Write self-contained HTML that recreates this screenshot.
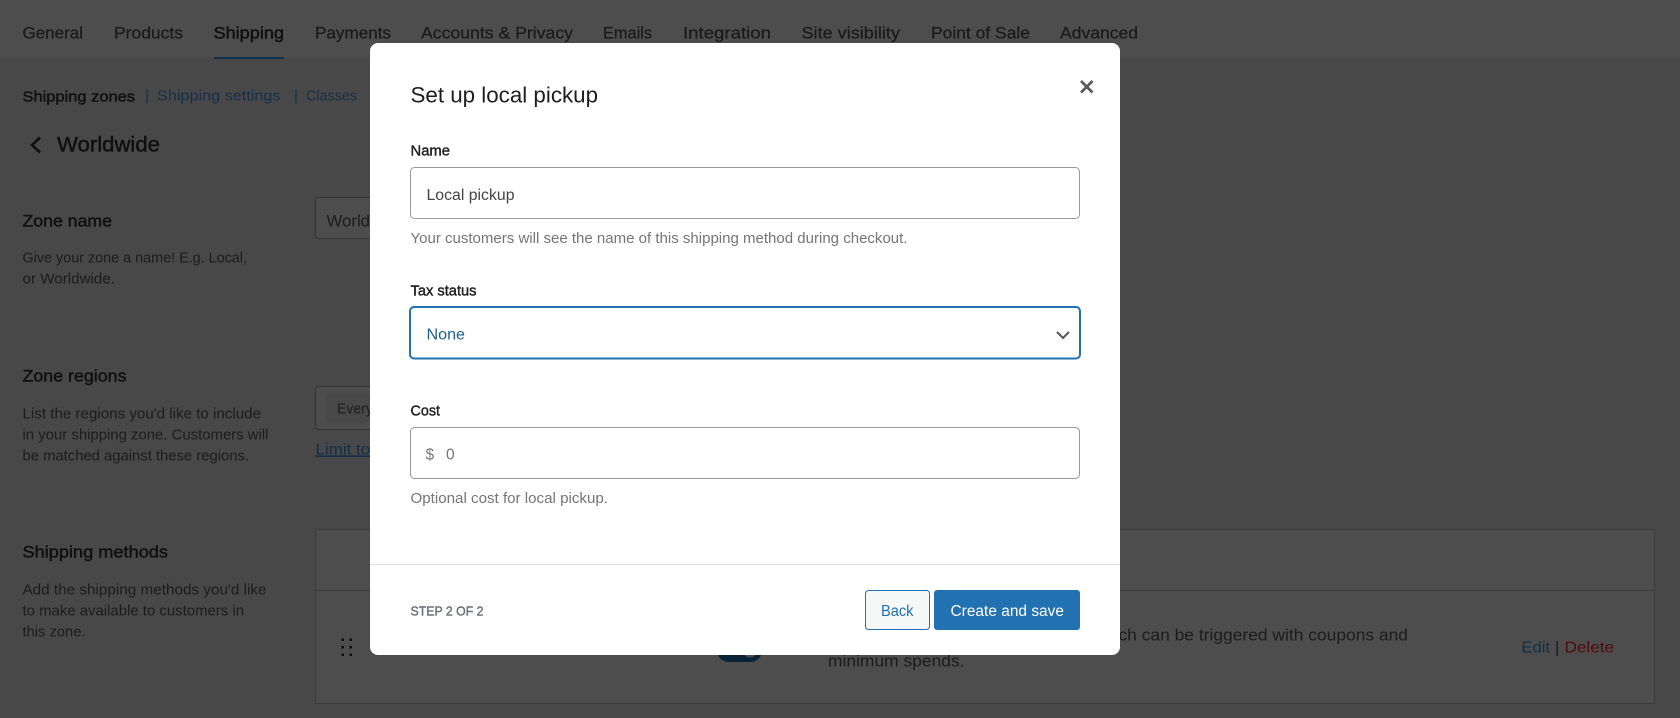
<!DOCTYPE html>
<html lang="en">
<head>
<meta charset="utf-8">
<title>Set up local pickup</title>
<style>
html,body{margin:0;padding:0;width:1680px;height:718px;overflow:hidden;background:#484848}
svg{display:block;position:absolute;left:0;top:0}
text{font-family:"Liberation Sans",Arial,sans-serif;transform:translateY(-.6px)}
.h{fill:#1a1a1a;stroke:#1a1a1a;stroke-width:.25}
.t{fill:#101010;stroke:#101010;stroke-width:.45}
.p{fill:#1c1c1c}
.l{fill:#1e1e1e;stroke:#1e1e1e;stroke-width:.4}
.g{fill:#757575}
</style>
</head>
<body>
<svg width="1680" height="718" viewBox="0 0 1680 718" xmlns="http://www.w3.org/2000/svg">
  <rect width="1680" height="718" fill="#484848"/>
  <rect width="1680" height="58" fill="#4d4d4d"/>
  <rect y="57" width="1680" height="1" fill="#474747"/>

  <!-- tabs -->
  <g font-size="17">
    <text class="h" x="22.5" y="39" textLength="60.5" lengthAdjust="spacingAndGlyphs">General</text>
    <text class="h" x="114" y="39" textLength="69" lengthAdjust="spacingAndGlyphs">Products</text>
    <text class="t" x="213.5" y="39" textLength="70.5" lengthAdjust="spacingAndGlyphs">Shipping</text>
    <text class="h" x="315" y="39" textLength="76" lengthAdjust="spacingAndGlyphs">Payments</text>
    <text class="h" x="421" y="39" textLength="152" lengthAdjust="spacingAndGlyphs">Accounts &amp; Privacy</text>
    <text class="h" x="603" y="39" textLength="49" lengthAdjust="spacingAndGlyphs">Emails</text>
    <text class="h" x="683" y="39" textLength="88" lengthAdjust="spacingAndGlyphs">Integration</text>
    <text class="h" x="801.5" y="39" textLength="98.5" lengthAdjust="spacingAndGlyphs">Site visibility</text>
    <text class="h" x="931" y="39" textLength="99" lengthAdjust="spacingAndGlyphs">Point of Sale</text>
    <text class="h" x="1060" y="39" textLength="78" lengthAdjust="spacingAndGlyphs">Advanced</text>
  </g>
  <rect x="214" y="57" width="70" height="2" fill="#0d3350"/>

  <!-- sub nav -->
  <g font-size="15">
    <text class="t" x="22.5" y="102" textLength="112.5" lengthAdjust="spacingAndGlyphs">Shipping zones</text>
    <text fill="#14304a" x="145" y="101">|</text>
    <text fill="#14304a" x="157" y="101" textLength="123.5" lengthAdjust="spacingAndGlyphs">Shipping settings</text>
    <text fill="#14304a" x="294" y="101">|</text>
    <text fill="#14304a" x="306" y="101" textLength="51" lengthAdjust="spacingAndGlyphs">Classes</text>
  </g>

  <!-- back -->
  <path d="M40 137.500L32 145L40 152.500" fill="none" stroke="#101010" stroke-width="2.600"/>
  <text class="t" font-size="21" x="57" y="152" textLength="103" lengthAdjust="spacingAndGlyphs">Worldwide</text>

  <!-- zone name -->
  <text class="t" font-size="17" x="22.5" y="227" textLength="89.5" lengthAdjust="spacingAndGlyphs">Zone name</text>
  <g font-size="14.500" class="p">
    <text x="22.5" y="263" textLength="224.5" lengthAdjust="spacingAndGlyphs">Give your zone a name! E.g. Local,</text>
    <text x="22.5" y="284" textLength="92.5" lengthAdjust="spacingAndGlyphs">or Worldwide.</text>
  </g>
  <rect x="315.500" y="197.500" width="300" height="41" rx="3" fill="#4d4d4d" stroke="#343434"/>
  <text class="p" font-size="17" x="326.500" y="227" textLength="78" lengthAdjust="spacingAndGlyphs">Worldwide</text>

  <!-- zone regions -->
  <text class="t" font-size="17" x="22.5" y="382" textLength="104" lengthAdjust="spacingAndGlyphs">Zone regions</text>
  <g font-size="14.500" class="p">
    <text x="22.5" y="419" textLength="238.5" lengthAdjust="spacingAndGlyphs">List the regions you'd like to include</text>
    <text x="22.5" y="440" textLength="246" lengthAdjust="spacingAndGlyphs">in your shipping zone. Customers will</text>
    <text x="22.5" y="461" textLength="226.500" lengthAdjust="spacingAndGlyphs">be matched against these regions.</text>
  </g>
  <rect x="315.500" y="386.500" width="300" height="43" rx="3" fill="#4d4d4d" stroke="#343434"/>
  <rect x="326" y="393" width="150" height="30" fill="#484848"/>
  <text class="p" font-size="15" x="337" y="414" textLength="74" lengthAdjust="spacingAndGlyphs">Everywhere</text>
  <text fill="#123048" font-size="16" x="315.500" y="455" text-decoration="underline" textLength="147" lengthAdjust="spacingAndGlyphs">Limit to specific ZIP</text>

  <!-- shipping methods -->
  <text class="t" font-size="17" x="22.5" y="558" textLength="145.500" lengthAdjust="spacingAndGlyphs">Shipping methods</text>
  <g font-size="14.500" class="p">
    <text x="22.5" y="595" textLength="244" lengthAdjust="spacingAndGlyphs">Add the shipping methods you'd like</text>
    <text x="22.5" y="616" textLength="221.500" lengthAdjust="spacingAndGlyphs">to make available to customers in</text>
    <text x="22.5" y="637" textLength="63" lengthAdjust="spacingAndGlyphs">this zone.</text>
  </g>

  <!-- table -->
  <rect x="315.500" y="529.500" width="1339" height="174" fill="#4d4d4d" stroke="#3b3b3b"/>
  <rect x="315" y="590" width="1340" height="1" fill="#3b3b3b"/>
  <g fill="#0e0e0e">
    <rect x="341.500" y="638.500" width="2.500" height="2.500"/><rect x="349.500" y="638.500" width="2.500" height="2.500"/>
    <rect x="341.500" y="646" width="2.500" height="2.500"/><rect x="349.500" y="646" width="2.500" height="2.500"/>
    <rect x="341.500" y="653.500" width="2.500" height="2.500"/><rect x="349.500" y="653.500" width="2.500" height="2.500"/>
  </g>
  <text class="p" font-size="17" x="488" y="652" text-anchor="end">Free shipping</text>
  <rect x="717" y="639" width="45" height="23" rx="11.500" fill="#082436"/>
  <circle cx="750" cy="650" r="8" fill="#4d4d4d" stroke="#082436" stroke-width="1"/>
  <text class="p" font-size="17" x="828" y="641" textLength="580" lengthAdjust="spacingAndGlyphs">Free shipping is a special method which can be triggered with coupons and</text>
  <text class="p" font-size="17" x="828" y="667" textLength="136.500" lengthAdjust="spacingAndGlyphs">minimum spends.</text>
  <g font-size="16">
    <text fill="#123048" x="1521.500" y="653" textLength="28.500" lengthAdjust="spacingAndGlyphs">Edit</text>
    <text fill="#181818" x="1555" y="653">|</text>
    <text fill="#4f0a0a" x="1564.500" y="653" textLength="49.500" lengthAdjust="spacingAndGlyphs">Delete</text>
  </g>

  <!-- modal -->
  <rect x="370" y="43" width="750" height="612" rx="8" fill="#fff"/>
  <text fill="#1e1e1e" font-size="22" x="410.500" y="103" textLength="187.500" lengthAdjust="spacingAndGlyphs">Set up local pickup</text>
  <path d="M1081 81L1092.500 92.500M1092.500 81L1081 92.500" fill="none" stroke="#5a5a5a" stroke-width="2.700"/>

  <text class="l" font-size="15" x="410.500" y="156" textLength="39.500" lengthAdjust="spacingAndGlyphs">Name</text>
  <rect x="410.500" y="167.500" width="669" height="51" rx="4" fill="#fff" stroke="#9a9a9a"/>
  <text fill="#444" font-size="15.500" x="426.500" y="200.500" textLength="88" lengthAdjust="spacingAndGlyphs">Local pickup</text>
  <text class="g" font-size="14.500" x="410.500" y="243.500" textLength="497" lengthAdjust="spacingAndGlyphs">Your customers will see the name of this shipping method during checkout.</text>

  <text class="l" font-size="15" x="410.500" y="296" textLength="66" lengthAdjust="spacingAndGlyphs">Tax status</text>
  <rect x="410" y="307" width="670" height="51.500" rx="4" fill="#fff" stroke="#2271b1" stroke-width="2"/>
  <text fill="#1f5f8f" font-size="15.500" x="426.500" y="340" textLength="38.500" lengthAdjust="spacingAndGlyphs">None</text>
  <path d="M1057 332L1063 338L1069 332" fill="none" stroke="#555" stroke-width="2"/>

  <text class="l" font-size="15" x="410.500" y="416" textLength="29.500" lengthAdjust="spacingAndGlyphs">Cost</text>
  <rect x="410.500" y="427.500" width="669" height="51" rx="4" fill="#fff" stroke="#9a9a9a"/>
  <text fill="#7a7a7a" font-size="15.500" x="425.500" y="460">$</text>
  <text fill="#777" font-size="15.500" x="446" y="460">0</text>
  <text class="g" font-size="14.500" x="410.500" y="503.500" textLength="197.500" lengthAdjust="spacingAndGlyphs">Optional cost for local pickup.</text>

  <rect x="370" y="564" width="750" height="1" fill="#e0e0e0"/>
  <text fill="#6b6f75" stroke="#6b6f75" stroke-width=".4" font-size="13" x="410.500" y="616" textLength="73" lengthAdjust="spacingAndGlyphs">STEP 2 OF 2</text>

  <rect x="865.500" y="590.500" width="64" height="39" rx="3" fill="#f6f7f7" stroke="#2271b1"/>
  <text fill="#2271b1" font-size="15.500" x="881" y="616.500" textLength="32.500" lengthAdjust="spacingAndGlyphs">Back</text>
  <rect x="934" y="590" width="146" height="40" rx="3" fill="#2271b1"/>
  <text fill="#fff" font-size="15.500" x="950.500" y="616.500" textLength="113.500" lengthAdjust="spacingAndGlyphs">Create and save</text>
</svg>
</body>
</html>
